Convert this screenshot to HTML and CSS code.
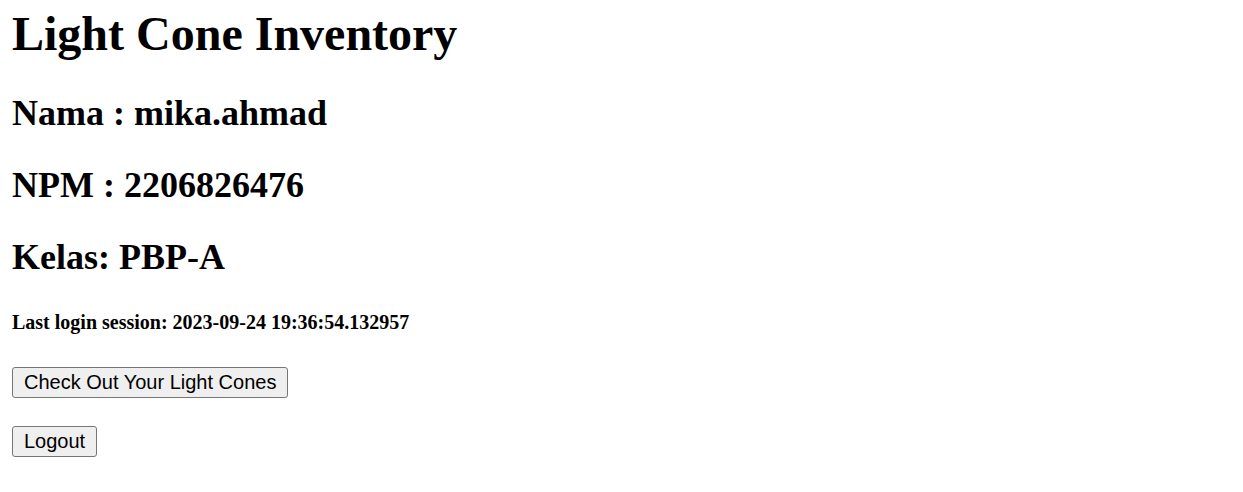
FILE: index.html
```html
<!DOCTYPE html>
<html>
<head>
<meta charset="utf-8">
<link rel="stylesheet" href="styles.css">
<title>Light Cone Inventory</title>
</head>
<body>
<main class="page">
  <h1 class="title">Light Cone Inventory</h1>
  <h2 class="info">Nama : mika.ahmad</h2>
  <h2 class="info">NPM : 2206826476</h2>
  <h2 class="info">Kelas: PBP-A</h2>
  <h5 class="session">Last login session: 2023-09-24 19:36:54.132957</h5>
  <div class="actions">
    <button class="btn btn-first" type="button">Check Out Your Light Cones</button>
    <button class="btn btn-second" type="button">Logout</button>
  </div>
</main>
</body>
</html>
```
FILE: styles.css
```css
html, body {
  margin: 0;
  padding: 0;
  background: #ffffff;
  color: #000000;
}
.page {
  padding: 6px 12px 0 12px;
  font-family: "Liberation Serif", "Times New Roman", serif;
}
.title {
  margin: 0;
  font-size: 48px;
  line-height: 56px;
  font-weight: bold;
}
.info {
  margin: 32px 0 0 0;
  font-size: 36px;
  line-height: 40px;
  font-weight: bold;
}
.title + .info {
  margin-top: 31px;
}
.session {
  margin: 34px 0 0 0;
  font-size: 20px;
  line-height: 23px;
  font-weight: bold;
}
.actions {
  display: flex;
  flex-direction: column;
  align-items: flex-start;
}
.btn {
  font-family: "Liberation Sans", Arial, sans-serif;
  font-size: 20px;
  color: #000;
  background: #efefef;
  border: 1px solid #767676;
  border-radius: 3px;
  padding: 3px 11px;
  line-height: 23px;
}
.btn-first {
  margin-top: 33px;
}
.btn-second {
  margin-top: 28px;
}
```
